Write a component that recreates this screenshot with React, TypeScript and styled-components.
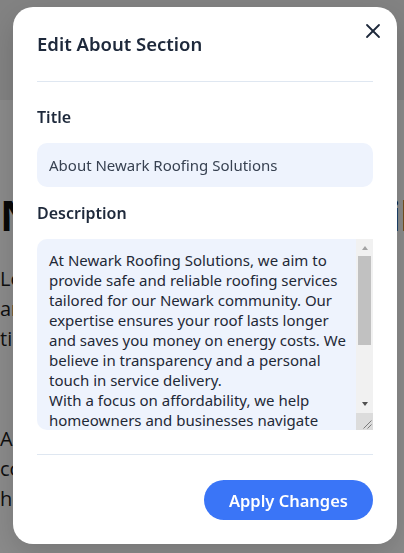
import React, { useState } from "react";
import styled, { createGlobalStyle } from "styled-components";
import { X } from "lucide-react";

const GlobalStyle = createGlobalStyle`
  html, body { margin: 0; padding: 0; }
  body {
    font-family: "Noto Sans", "Open Sans", sans-serif;
    background: #ffffff;
    overflow: hidden;
  }
  * { box-sizing: border-box; }
`;

/* ---------- background page ---------- */
const Page = styled.div`
  width: 404px;
  height: 553px;
  overflow: hidden;
  background: #ffffff;
  font-family: "Open Sans", "Noto Sans", sans-serif;
  color: #111111;
`;

const SiteHeader = styled.header`
  height: 100px;
  background: #f0f0f0;
`;

const AboutSection = styled.section`
  padding: 90px 0 0;
`;

const AboutHeading = styled.h1`
  margin: 0 0 24px;
  font-size: 42px;
  line-height: 50px;
  font-weight: 700;
  white-space: nowrap;
  letter-spacing: -0.5px;
`;

const AboutText = styled.p<{ $spaced?: boolean }>`
  margin: ${(p) => (p.$spaced ? "70px" : "0")} 0 0;
  font-size: 20px;
  line-height: 30px;
  color: #1a1a1a;
`;

/* ---------- modal ---------- */
const Overlay = styled.div`
  position: fixed;
  inset: 0;
  background: rgba(0, 0, 0, 0.46);
  display: flex;
  align-items: flex-start;
  padding: 7px 7px 9px 13px;
`;

const Dialog = styled.div`
  position: relative;
  width: 384px;
  height: 537px;
  background: #ffffff;
  border-radius: 20px;
  box-shadow: 0 10px 30px rgba(0, 0, 0, 0.15);
  display: flex;
  flex-direction: column;
  color: #1e293b;
`;

const CloseButton = styled.button`
  position: absolute;
  top: 12px;
  right: 12px;
  width: 24px;
  height: 24px;
  padding: 0;
  border: none;
  background: transparent;
  color: #1e293b;
  display: flex;
  align-items: center;
  justify-content: center;
  cursor: pointer;
`;

const DialogHeader = styled.div`
  margin: 0 24px;
  padding: 24px 0;
  border-bottom: 1px solid #dfe7f1;
`;

const DialogTitle = styled.h2`
  margin: 0;
  font-size: 18.5px;
  line-height: 26px;
  font-weight: 600;
  color: #1e293b;
`;

const DialogBody = styled.div`
  margin: 0 24px;
  padding: 23px 0 24px;
  border-bottom: 1px solid #dfe7f1;
  display: flex;
  flex-direction: column;
  gap: 14px;
`;

const Field = styled.div`
  display: flex;
  flex-direction: column;
`;

const Label = styled.label`
  font-size: 16px;
  line-height: 25px;
  font-weight: 600;
  color: #1e293b;
  margin-bottom: 13px;
`;

const TextInput = styled.input`
  height: 44px;
  width: 100%;
  border: none;
  outline: none;
  border-radius: 10px;
  background: #eef3fd;
  padding: 0 12px;
  font-family: "Noto Sans", "Open Sans", sans-serif;
  font-size: 15px;
  color: #374151;
`;

const TextAreaWrap = styled.div`
  position: relative;
  height: 191px;
`;

const TextArea = styled.textarea`
  display: block;
  height: 100%;
  width: 100%;
  border: none;
  outline: none;
  border-radius: 10px;
  background: #eef3fd;
  padding: 11px 27px 11px 12px;
  font-family: "Noto Sans", "Open Sans", sans-serif;
  font-size: 15px;
  line-height: 20px;
  color: #1f2937;
  resize: none;
`;

/* classic scrollbar drawn over the textarea's right edge */
const ScrollRail = styled.div`
  position: absolute;
  top: 0;
  right: 0;
  bottom: 0;
  width: 17px;
  display: flex;
  flex-direction: column;
  background: #f1f1f1;
  pointer-events: none;
`;

const ScrollArrow = styled.div<{ $dir: "up" | "down" }>`
  height: 17px;
  flex: none;
  display: flex;
  align-items: center;
  justify-content: center;

  &::before {
    content: "";
    width: 0;
    height: 0;
    border-left: 3.5px solid transparent;
    border-right: 3.5px solid transparent;
    ${(p) =>
      p.$dir === "up"
        ? "border-bottom: 4px solid #a3a3a3; margin-top: 1px;"
        : "border-top: 4px solid #505050; margin-bottom: 1px;"}
  }
`;

const ScrollTrack = styled.div`
  flex: 1;
  padding: 0 2px;
`;

const ScrollThumb = styled.div`
  height: 89px;
  background: #c1c1c1;
`;

const ResizeCorner = styled.div`
  height: 17px;
  flex: none;
  background: #dcdcdc;
  display: flex;
`;

const DialogFooter = styled.div`
  padding: 25px 24px 24px;
  display: flex;
  justify-content: flex-end;
`;

const PrimaryButton = styled.button`
  height: 40px;
  padding: 0 25px;
  border: none;
  border-radius: 999px;
  background: #3a75f7;
  color: #ffffff;
  font-family: "Noto Sans", "Open Sans", sans-serif;
  font-size: 16.5px;
  font-weight: 600;
  cursor: pointer;
`;

const initialDescription =
  "At Newark Roofing Solutions, we aim to provide safe and reliable roofing services tailored for our Newark community. Our expertise ensures your roof lasts longer and saves you money on energy costs. We believe in transparency and a personal touch in service delivery.\nWith a focus on affordability, we help homeowners and businesses navigate their roofing needs with confidence. From inspections and repairs to full replacements, our licensed team delivers quality work backed by honest pricing.";

export default function App() {
  const [title, setTitle] = useState("About Newark Roofing Solutions");
  const [description, setDescription] = useState(initialDescription);

  return (
    <>
      <GlobalStyle />
      <Page>
        <SiteHeader />
        <AboutSection>
          <AboutHeading>Newark Roofing Skill</AboutHeading>
          <AboutText>
            Local roofing experts serving the Newark area with honest work done
            right the first time and always on schedule.
          </AboutText>
          <AboutText $spaced>
            A family owned business with decades of combined experience, trusted
            by homeowners and businesses alike.
          </AboutText>
        </AboutSection>
      </Page>
      <Overlay>
        <Dialog role="dialog" aria-labelledby="edit-about-title">
          <CloseButton aria-label="Close">
            <X size={24} strokeWidth={1.8} />
          </CloseButton>
          <DialogHeader>
            <DialogTitle id="edit-about-title">Edit About Section</DialogTitle>
          </DialogHeader>
          <DialogBody>
            <Field>
              <Label htmlFor="about-title">Title</Label>
              <TextInput
                id="about-title"
                value={title}
                onChange={(e) => setTitle(e.target.value)}
              />
            </Field>
            <Field>
              <Label htmlFor="about-description">Description</Label>
              <TextAreaWrap>
                <TextArea
                  id="about-description"
                  value={description}
                  onChange={(e) => setDescription(e.target.value)}
                />
                <ScrollRail aria-hidden="true">
                  <ScrollArrow $dir="up" />
                  <ScrollTrack>
                    <ScrollThumb />
                  </ScrollTrack>
                  <ScrollArrow $dir="down" />
                  <ResizeCorner>
                    <svg width="17" height="17" viewBox="0 0 17 17">
                      <path d="M15.5 7.5 L7.5 15.5 M15.5 11.5 L11.5 15.5" stroke="#7a7a7a" strokeWidth="1" fill="none" />
                    </svg>
                  </ResizeCorner>
                </ScrollRail>
              </TextAreaWrap>
            </Field>
          </DialogBody>
          <DialogFooter>
            <PrimaryButton>Apply Changes</PrimaryButton>
          </DialogFooter>
        </Dialog>
      </Overlay>
    </>
  );
}
